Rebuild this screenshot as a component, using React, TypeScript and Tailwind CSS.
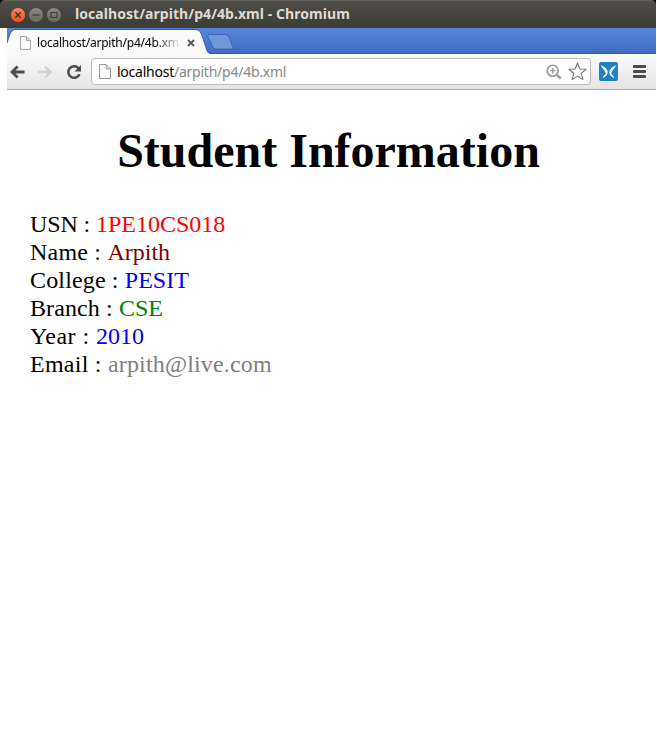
import React from "react";

const PageIcon = ({ className }: { className: string }) => (
  <svg className={className} viewBox="0 0 12 15" fill="#fafafa" stroke="#999" strokeWidth="1">
    <path d="M.5.5h6.8l4.2 4.3v9.7H.5z" />
    <path d="M7.2.8v4.1h4.1" fill="#ddd" />
  </svg>
);

function WindowButton({ kind }: { kind: "close" | "min" | "max" }) {
  return (
    <svg className="h-4 w-4 shrink-0" viewBox="0 0 16 16">
      <defs>
        <linearGradient id="orange" x2="0" y2="1">
          <stop stopColor="#f58a66" />
          <stop offset="1" stopColor="#e5501f" />
        </linearGradient>
        <linearGradient id="gray" x2="0" y2="1">
          <stop stopColor="#8b8981" />
          <stop offset="1" stopColor="#686660" />
        </linearGradient>
      </defs>
      <circle cx="8" cy="8" r="7.5" fill={kind === "close" ? "url(#orange)" : "url(#gray)"} stroke="#31302b" strokeWidth=".6" />
      {kind === "close" && <path d="m5.3 5.3 5.4 5.4m0-5.4-5.4 5.4" stroke="#4a2114" strokeWidth="1.3" />}
      {kind === "min" && <path d="M4.5 8h7" stroke="#3b3a35" strokeWidth="1.2" />}
      {kind === "max" && <path d="M5 5.5h6v5H5z" fill="none" stroke="#3b3a35" strokeWidth="1.1" />}
    </svg>
  );
}

function TitleBar() {
  return (
    <div className="flex h-7 w-[656px] items-center bg-black">
      <div className="flex h-7 w-full items-center gap-[2px] rounded-t-[5px] border-t border-[#605f59] bg-linear-to-b from-[#4e4d47] to-[#3c3b37] pl-[10px]">
        <WindowButton kind="close" />
        <WindowButton kind="min" />
        <WindowButton kind="max" />
        <span className="ml-[11px] -translate-y-px whitespace-nowrap font-['Noto_Sans',sans-serif] text-[14px] leading-[18px] font-bold tracking-[0.06px] text-[#dfdbd2]">
          localhost/arpith/p4/4b.xml - Chromium
        </span>
      </div>
    </div>
  );
}

function TabStrip() {
  return (
    <div className="relative ml-[7px] flex h-[26px] w-[649px] border-b border-[#315ba9] bg-linear-to-b from-[#5786d9] to-[#3d6cc5]">
      <svg className="absolute top-0 left-0 h-[26px] w-[240px]" viewBox="0 0 240 26">
        <path d="M0 26V15C2 9 3 2 8 1.5h180c5 0 6 3 8 9l3 9c1 4 2 6 5 6.5z" fill="#fafafa" />
        <path d="M0 15C2 9 3 2 8 1.5h180c5 0 6 3 8 9l3 9c1 4 2 6 5 6" fill="none" stroke="#3159a6" />
        <path d="M203 6.5h15c3 0 4 2 5 5l2.5 7c.8 2 0 2.5-2 2.5h-14c-3 0-4-2-5-5L201 9c-.7-2 0-2.5 2-2.5z" fill="#7197dd" stroke="#3c66b5" />
      </svg>
      <div className="relative flex h-[26px] w-[196px] shrink-0 items-center pt-[3px] pl-[13px]">
        <PageIcon className="h-[14px] w-[11px]" />
        <span className="ml-[6px] w-[141px] overflow-hidden bg-linear-to-r from-black from-80% to-[#ddd] bg-clip-text whitespace-nowrap font-['Noto_Sans',sans-serif] text-[12px] leading-[18px] tracking-[-0.22px] text-transparent">
          localhost/arpith/p4/4b.xml
        </span>
        <svg className="ml-[9px] h-[8px] w-[8px]" viewBox="0 0 8 8">
          <path d="m1 1 6 6m0-6L1 7" stroke="#555" strokeWidth="1.8" />
        </svg>
      </div>
    </div>
  );
}

function Toolbar() {
  return (
    <div className="ml-[7px] flex h-9 w-[649px] items-center border-b border-[#aaa] bg-linear-to-b from-[#fafafa] to-[#e5e5e5]">
      <svg className="ml-[3px] h-4 w-[15px]" viewBox="0 0 15 16" fill="none" stroke="#4c4c4c" strokeWidth="2.8">
        <path d="M2 8h12.5M7.6 2.5 2 8l5.6 5.5" />
      </svg>
      <svg className="ml-[13px] h-4 w-[15px]" viewBox="0 0 15 16" fill="none" stroke="#d0d0d0" strokeWidth="2.4">
        <path d="M0 8h12.5M7 2.6 12.8 8 7 13.4" />
      </svg>
      <svg className="ml-[13px] h-4 w-4" viewBox="0 0 16 16">
        <path d="M12.4 4.1A5.8 5.8 0 1 0 13.5 10.2" fill="none" stroke="#4c4c4c" strokeWidth="2.5" />
        <path d="M15 1v6.4H8.6z" fill="#4c4c4c" />
      </svg>
      <div className="ml-[9px] flex h-[27px] w-[500px] items-center rounded-[4px] border border-[#bbb] bg-white">
        <PageIcon className="ml-[7px] h-[15px] w-[12px]" />
        <span className="ml-[6px] whitespace-nowrap font-['Noto_Sans',sans-serif] text-[14px] leading-5 tracking-[-0.24px] text-[#888]">
          <span className="text-black">localhost</span>/arpith/p4/4b.xml
        </span>
        <svg className="mr-[6px] ml-auto h-4 w-4" viewBox="0 0 16 16" fill="none" stroke="#999">
          <circle cx="6.7" cy="6.7" r="5.5" strokeWidth="1.6" />
          <path d="M6.7 4v5.4M4 6.7h5.4" strokeWidth="1.3" />
          <path d="m11 11 3.7 3.7" strokeWidth="2.4" />
        </svg>
        <svg className="mr-[3px] h-[19px] w-[19px]" viewBox="0 0 19 19" fill="#fff" stroke="#777" strokeWidth="1.1" strokeLinejoin="round">
          <path d="m9.5 1 2.4 6 6.2.3-4.9 4 1.7 6.3-5.4-3.5-5.4 3.5 1.7-6.3-4.9-4L7.1 7z" />
        </svg>
      </div>
      <svg className="ml-2 h-[19px] w-[19px]" viewBox="0 0 19 19">
        <rect width="19" height="19" rx="2" fill="#2182c5" />
        <path d="M1.8 3.2C5.5 4.5 8.7 7 8.7 10c0 2.6-1.7 4.4-4.9 6.2.3-2 1.4-3.2 3-4.3C6.6 9 3.5 6.8 1.8 3.2zm15.4 0C13.5 4.5 10.3 7 10.3 10c0 2.6 1.7 4.4 4.9 6.2-.3-2-1.4-3.2-3-4.3.2-2.9 3.3-5.1 5-8.7z" fill="#fff" />
      </svg>
      <svg className="ml-[15px] h-[13px] w-[13px]" viewBox="0 0 13 13" fill="#4c4c4c">
        <rect width="13" height="3" rx=".8" />
        <rect y="5" width="13" height="3" rx=".8" />
        <rect y="10" width="13" height="3" rx=".8" />
      </svg>
    </div>
  );
}

const rows = [
  { label: "USN", value: "1PE10CS018", spacing: "tracking-[-0.12px]", color: "tracking-normal text-[#ff0000]" },
  { label: "Name", value: "Arpith", spacing: "tracking-[0.2px]", color: "tracking-normal text-[#800000]" },
  { label: "College", value: "PESIT", spacing: "tracking-[0.15px]", color: "tracking-normal text-[#0000ff]" },
  { label: "Branch", value: "CSE", spacing: "tracking-[0.1px]", color: "tracking-normal text-[#008000]" },
  { label: "Year", value: "2010", spacing: "tracking-[0.43px]", color: "tracking-normal text-[#0000ff]" },
  { label: "Email", value: "arpith@live.com", spacing: "tracking-[0.25px]", color: "tracking-[0.16px] text-[#808080]" },
];

export default function App() {
  return (
    <div className="h-[744px] w-[657px] overflow-hidden bg-white">
      <TitleBar />
      <TabStrip />
      <Toolbar />
      <main className="font-['Liberation_Serif',serif] text-black">
        <h1 className="mt-[33px] text-center text-[48px] leading-[56px] font-bold">Student Information</h1>
        <div className="mt-[31px] ml-[30px] text-[24px] leading-7">
          {rows.map((r) => (
            <p key={r.label} className={r.spacing}>
              {r.label} : <span className={r.color}>{r.value}</span>
            </p>
          ))}
        </div>
      </main>
    </div>
  );
}
